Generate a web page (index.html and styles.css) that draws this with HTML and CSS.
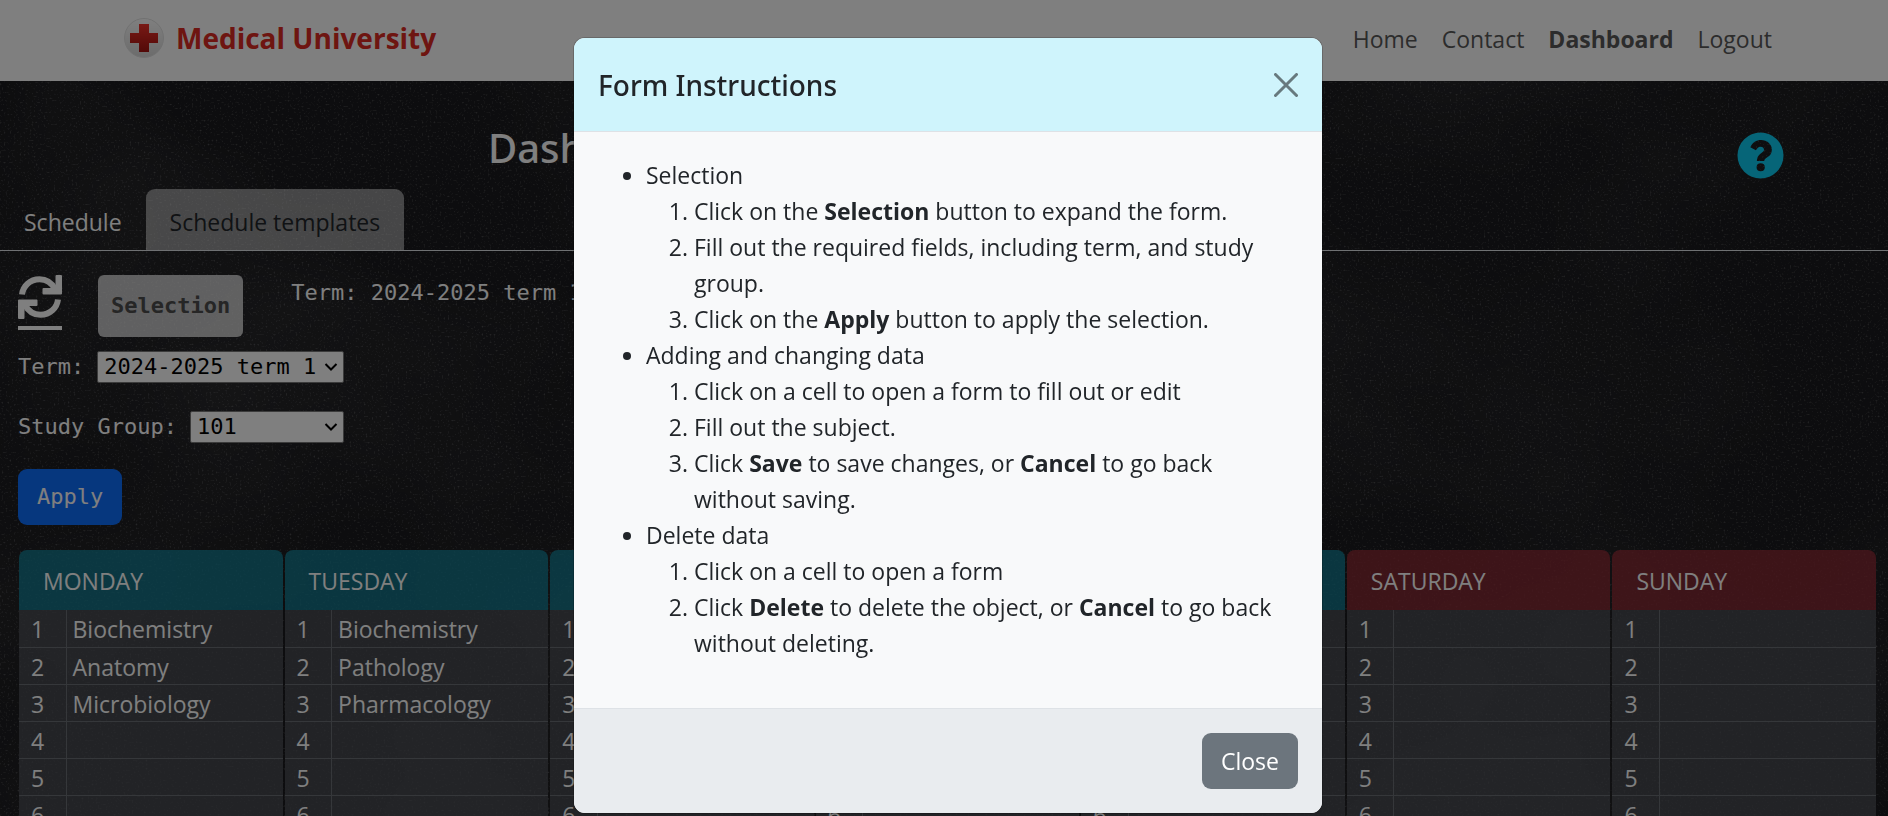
FILE: index.html
```html
<!DOCTYPE html>
<html lang="en">
<head>
<meta charset="utf-8">
<title>Medical University - Dashboard</title>
<link rel="stylesheet" href="styles.css">
</head>
<body>
<svg class="chalk" aria-hidden="true">
  <defs>
    <filter id="dust" x="0" y="0" width="100%" height="100%">
      <feTurbulence type="fractalNoise" baseFrequency="0.5" numOctaves="3" seed="8"/>
      <feColorMatrix values="0 0 0 0 1  0 0 0 0 1  0 0 0 0 1  2.6 0 0 0 -1.55"/>
    </filter>
    <filter id="smudge" x="0" y="0" width="100%" height="100%">
      <feTurbulence type="fractalNoise" baseFrequency="0.003 0.004" numOctaves="3" seed="3"/>
      <feColorMatrix values="0 0 0 0 1  0 0 0 0 1  0 0 0 0 1  0.3 0 0 0 -0.12"/>
    </filter>
  </defs>
  <rect width="100%" height="100%" filter="url(#smudge)" opacity="0.4"/>
  <rect width="100%" height="100%" filter="url(#dust)" opacity="0.3"/>
</svg>

<header class="site-header">
  <a class="brand" href="#">
    <svg class="brand-logo" viewBox="0 0 40 40" aria-hidden="true">
      <defs>
        <linearGradient id="disc" x1="0" y1="0" x2="0" y2="1">
          <stop offset="0" stop-color="#fff"/><stop offset="1" stop-color="#d8d8d8"/>
        </linearGradient>
        <linearGradient id="cross" x1="0" y1="0" x2="0" y2="1">
          <stop offset="0" stop-color="#f2332b"/><stop offset="1" stop-color="#a51310"/>
        </linearGradient>
      </defs>
      <circle cx="20" cy="20" r="19.5" fill="url(#disc)" stroke="#e2e2e2"/>
      <path d="M15 6h10v9h9v10h-9v9H15v-9H6V15h9z" fill="url(#cross)"/>
    </svg>
    <span>Medical University</span>
  </a>
  <nav class="site-nav">
    <a href="#">Home</a>
    <a href="#">Contact</a>
    <a href="#" class="current">Dashboard</a>
    <a href="#">Logout</a>
  </nav>
</header>

<main class="page">
  <div class="title-row">
    <h1>Dashboard</h1>
    <button class="help" type="button" aria-label="Help">
      <svg viewBox="0 0 48 48" aria-hidden="true">
        <path class="help-disc" fill-rule="evenodd" d="M24 .5a23.500 23.500 0 1 0 0 47 23.500 23.500 0 0 0 0-47zM13.600 15.500C16 10.700 19.600 8.200 24.600 8.200c6 0 11 4.200 11 9.800 0 7.600-7.800 7.800-7.800 11.500H20.300c0-8 7.300-8 7.300-11.500 0-1.900-1.600-3-3.400-3-2 0-3.400 1.100-4.900 3.600zM24.200 31.800a4.200 4.200 0 1 1 0 8.400 4.200 4.200 0 0 1 0-8.400z"/>
      </svg>
    </button>
  </div>

  <nav class="tabs">
    <a href="#" class="tab">Schedule</a>
    <a href="#" class="tab active">Schedule templates</a>
  </nav>

  <section class="filters">
    <div class="toolbar">
      <a class="refresh" href="#" aria-label="Refresh">
        <svg viewBox="0 0 44 44" aria-hidden="true">
          <g fill="none" stroke="currentColor" stroke-width="6">
            <path d="M4 19.500C5 11 12 4.200 21.500 4.200c6.500 0 12 3.300 15.500 9.800"/>
            <path d="M40 24.500C39 33 32 39.800 22.500 39.800c-6.500 0-12-3.300-15.500-9.800"/>
          </g>
          <path fill="currentColor" d="M37.500 1q0-1 1-1H43q1 0 1 1v17.500q0 1-1 1H25.500q-1 0-1-1V14q0-1 1-1h8.500l3.500-3zM6.500 43q0 1-1 1H1q-1 0-1-1V25.500q0-1 1-1h17.500q1 0 1 1V30q0 1-1 1H10l-3.500 3z"/>
        </svg>
      </a>
      <button class="btn-selection" type="button">Selection</button>
      <span class="summary">Term: 2024-2025 term 1</span>
    </div>
    <form class="filter-form">
      <div class="field">
        <label for="term">Term:</label>
        <span class="select-box"><select id="term"><option>2024-2025 term 1</option></select><svg viewBox="0 0 14 10" aria-hidden="true"><path d="M1.500 2 7 7.500 12.500 2"/></svg></span>
      </div>
      <div class="field">
        <label for="group">Study Group:</label>
        <span class="select-box"><select id="group"><option>101</option></select><svg viewBox="0 0 14 10" aria-hidden="true"><path d="M1.500 2 7 7.500 12.500 2"/></svg></span>
      </div>
      <button class="btn-apply" type="button">Apply</button>
    </form>
  </section>

  <section class="week">
    <article class="day">
      <h2>MONDAY</h2>
      <table>
        <tr><th>1</th><td>Biochemistry</td></tr><tr><th>2</th><td>Anatomy</td></tr><tr><th>3</th><td>Microbiology</td></tr><tr><th>4</th><td></td></tr><tr><th>5</th><td></td></tr><tr><th>6</th><td></td></tr>
      </table>
    </article>
    <article class="day">
      <h2>TUESDAY</h2>
      <table>
        <tr><th>1</th><td>Biochemistry</td></tr><tr><th>2</th><td>Pathology</td></tr><tr><th>3</th><td>Pharmacology</td></tr><tr><th>4</th><td></td></tr><tr><th>5</th><td></td></tr><tr><th>6</th><td></td></tr>
      </table>
    </article>
    <article class="day">
      <h2>WEDNESDAY</h2>
      <table>
        <tr><th>1</th><td></td></tr><tr><th>2</th><td></td></tr><tr><th>3</th><td></td></tr><tr><th>4</th><td></td></tr><tr><th>5</th><td></td></tr><tr><th>6</th><td></td></tr>
      </table>
    </article>
    <article class="day">
      <h2>THURSDAY</h2>
      <table>
        <tr><th>1</th><td></td></tr><tr><th>2</th><td></td></tr><tr><th>3</th><td></td></tr><tr><th>4</th><td></td></tr><tr><th>5</th><td></td></tr><tr><th>6</th><td></td></tr>
      </table>
    </article>
    <article class="day">
      <h2>FRIDAY</h2>
      <table>
        <tr><th>1</th><td></td></tr><tr><th>2</th><td></td></tr><tr><th>3</th><td></td></tr><tr><th>4</th><td></td></tr><tr><th>5</th><td></td></tr><tr><th>6</th><td></td></tr>
      </table>
    </article>
    <article class="day weekend">
      <h2>SATURDAY</h2>
      <table>
        <tr><th>1</th><td></td></tr><tr><th>2</th><td></td></tr><tr><th>3</th><td></td></tr><tr><th>4</th><td></td></tr><tr><th>5</th><td></td></tr><tr><th>6</th><td></td></tr>
      </table>
    </article>
    <article class="day weekend">
      <h2>SUNDAY</h2>
      <table>
        <tr><th>1</th><td></td></tr><tr><th>2</th><td></td></tr><tr><th>3</th><td></td></tr><tr><th>4</th><td></td></tr><tr><th>5</th><td></td></tr><tr><th>6</th><td></td></tr>
      </table>
    </article>
  </section>
</main>

<div class="backdrop">
  <div class="modal" role="dialog" aria-modal="true" aria-labelledby="modal-title">
    <div class="modal-header">
      <h2 id="modal-title">Form Instructions</h2>
      <button class="modal-x" type="button" aria-label="Dismiss">
        <svg viewBox="0 0 24 24" aria-hidden="true"><path d="M1.500 1.500l21 21M22.500 1.500l-21 21"/></svg>
      </button>
    </div>
    <div class="modal-body">
      <ul>
        <li>Selection
          <ol>
            <li>Click on the <strong>Selection</strong> button to expand the form.</li>
            <li>Fill out the required fields, including term, and study group.</li>
            <li>Click on the <strong>Apply</strong> button to apply the selection.</li>
          </ol>
        </li>
        <li>Adding and changing data
          <ol>
            <li>Click on a cell to open a form to fill out or edit</li>
            <li>Fill out the subject.</li>
            <li>Click <strong>Save</strong> to save changes, or <strong>Cancel</strong> to go back without saving.</li>
          </ol>
        </li>
        <li>Delete data
          <ol>
            <li>Click on a cell to open a form</li>
            <li>Click <strong>Delete</strong> to delete the object, or <strong>Cancel</strong> to go back without deleting.</li>
          </ol>
        </li>
      </ul>
    </div>
    <div class="modal-footer">
      <button class="btn-close" type="button">Close</button>
    </div>
  </div>
</div>
</body>
</html>
```

FILE: styles.css
```css
* { box-sizing: border-box; }

html, body { height: 100%; }

body {
  margin: 0;
  overflow: hidden;
  background: #1b1b1e;
  color: #fff;
  font-family: "Open Sans", "Noto Sans", sans-serif;
  font-size: 23px;
  line-height: 36px;
}

h1, h2, ul, ol { margin: 0; }
a { color: inherit; text-decoration: none; }
button, select { font: inherit; color: inherit; }
button { cursor: pointer; }

.chalk {
  position: absolute;
  inset: 0;
  z-index: -1;
  width: 100%;
  height: 100%;
}

/* Site header */
.site-header {
  display: flex;
  justify-content: space-between;
  align-items: center;
  height: 81px;
  padding: 0 116px 5px 124px;
  background: #fff;
}

.brand {
  display: flex;
  align-items: center;
  gap: 12px;
  color: #dc2a22;
  font-size: 28px;
  font-weight: 700;
}
.brand-logo { width: 40px; height: 40px; }

.site-nav {
  display: flex;
  gap: 24px;
  padding-top: 2px;
  color: #595959;
}
.site-nav .current { font-weight: 700; }

/* Title and tabs */
.title-row {
  display: flex;
  justify-content: space-between;
  align-items: flex-start;
  padding: 43px 104px 10px 488px;
}
.title-row h1 {
  font-family: "Noto Sans", "Open Sans", sans-serif;
  font-size: 40px;
  font-weight: 500;
  line-height: 48px;
}
.help {
  display: flex;
  padding: 8px 0 0;
  border: 0;
  background: none;
}
.help svg { width: 47px; height: 47px; }
.help-disc { fill: #0dcaf0; }

.tabs {
  display: flex;
  border-bottom: 1px solid #dee2e6;
}
.tab { padding: 15px 24px 10px; }
.tab.active {
  border-radius: 9px 9px 0 0;
  background: rgba(255, 255, 255, 0.5);
  color: #212529;
}

/* Filters */
.filters {
  padding: 24px 18px 25px;
  font-family: "DejaVu Sans Mono", "Liberation Mono", monospace;
  font-size: 22px;
}
.toolbar { display: flex; align-items: flex-start; }
.refresh {
  display: block;
  height: 55px;
  margin-right: 36px;
  border-bottom: 4px solid #fff;
}
.refresh svg { display: block; width: 44px; height: 44px; }
.btn-selection {
  height: 62px;
  padding: 0 13px;
  border: 0;
  border-radius: 6px;
  background: rgba(255, 255, 255, 0.72);
  color: #4c4c4c;
  font-weight: 700;
}
.summary { padding-left: 48px; white-space: nowrap; }

.filter-form {
  display: flex;
  flex-direction: column;
  align-items: flex-start;
  width: 326px;
  padding-top: 12px;
}
.field {
  display: flex;
  align-items: center;
  gap: 13px;
  width: 100%;
  height: 36px;
  margin-bottom: 24px;
}
.field label { white-space: nowrap; }
.select-box { display: grid; flex: 1; align-items: center; }
.select-box select {
  grid-area: 1 / 1;
  width: 100%;
  height: 32px;
  padding: 0 6px;
  border: 1px solid #767676;
  border-radius: 2px;
  background: #fff;
  color: #000;
  line-height: 28px;
  appearance: none;
}
.select-box svg {
  grid-area: 1 / 1;
  justify-self: end;
  width: 14px;
  height: 10px;
  margin-right: 6px;
  fill: none;
  stroke: #000;
  stroke-width: 2;
  pointer-events: none;
}
.btn-apply {
  height: 56px;
  padding: 0 19px;
  border: 0;
  border-radius: 9px;
  background: #0d6efd;
}

/* Week grid */
.week {
  display: grid;
  grid-template-columns: repeat(7, 1fr);
  gap: 2px;
  padding: 0 12px 0 19px;
}
.day h2 {
  height: 60px;
  padding: 0 24px;
  border-radius: 8px 8px 0 0;
  background: rgba(20, 138, 162, 0.75);
  font-size: 23px;
  font-weight: 400;
  line-height: 62px;
}
.weekend h2 { background: rgba(155, 45, 56, 0.75); }
.day table {
  width: 100%;
  border-collapse: collapse;
  background: rgba(85, 88, 95, 0.7);
}
.day th, .day td {
  height: 37px;
  padding: 2px 6px 0;
  border-bottom: 1px solid #6b6f74;
  font-weight: 400;
  line-height: 34px;
  text-align: left;
}
.day th {
  width: 47px;
  padding-left: 12px;
  border-right: 1px solid #6b6f74;
}

/* Modal */
.backdrop {
  position: fixed;
  inset: 0;
  display: flex;
  justify-content: center;
  align-items: flex-start;
  padding: 37px 0 0 8px;
  background: rgba(0, 0, 0, 0.5);
}
.modal {
  width: 750px;
  border: 1px solid rgba(0, 0, 0, 0.18);
  border-radius: 12px;
  background: #f8f9fa;
  background-clip: padding-box;
  color: #212529;
  overflow: hidden;
}
.modal-header {
  display: flex;
  justify-content: space-between;
  align-items: center;
  height: 94px;
  padding: 0 24px;
  border-bottom: 1px solid #dee2e6;
  background: #cff4fc;
}
.modal-header h2 {
  font-family: "Noto Sans", "Open Sans", sans-serif;
  font-size: 28px;
  font-weight: 500;
}
.modal-x {
  display: flex;
  padding: 0;
  border: 0;
  background: none;
}
.modal-x svg {
  width: 24px;
  height: 24px;
  fill: none;
  stroke: #67797e;
  stroke-width: 3;
  stroke-linecap: round;
}
.modal-body { padding: 25px 24px 47px; }
.modal-body ul, .modal-body ol { padding-left: 48px; }
.modal-footer {
  display: flex;
  justify-content: flex-end;
  padding: 24px;
  border-top: 1px solid #dee2e6;
  background: #e9ecef;
}
.btn-close {
  height: 56px;
  padding: 0 19px;
  border: 0;
  border-radius: 9px;
  background: #6c757d;
  color: #fff;
}
```
